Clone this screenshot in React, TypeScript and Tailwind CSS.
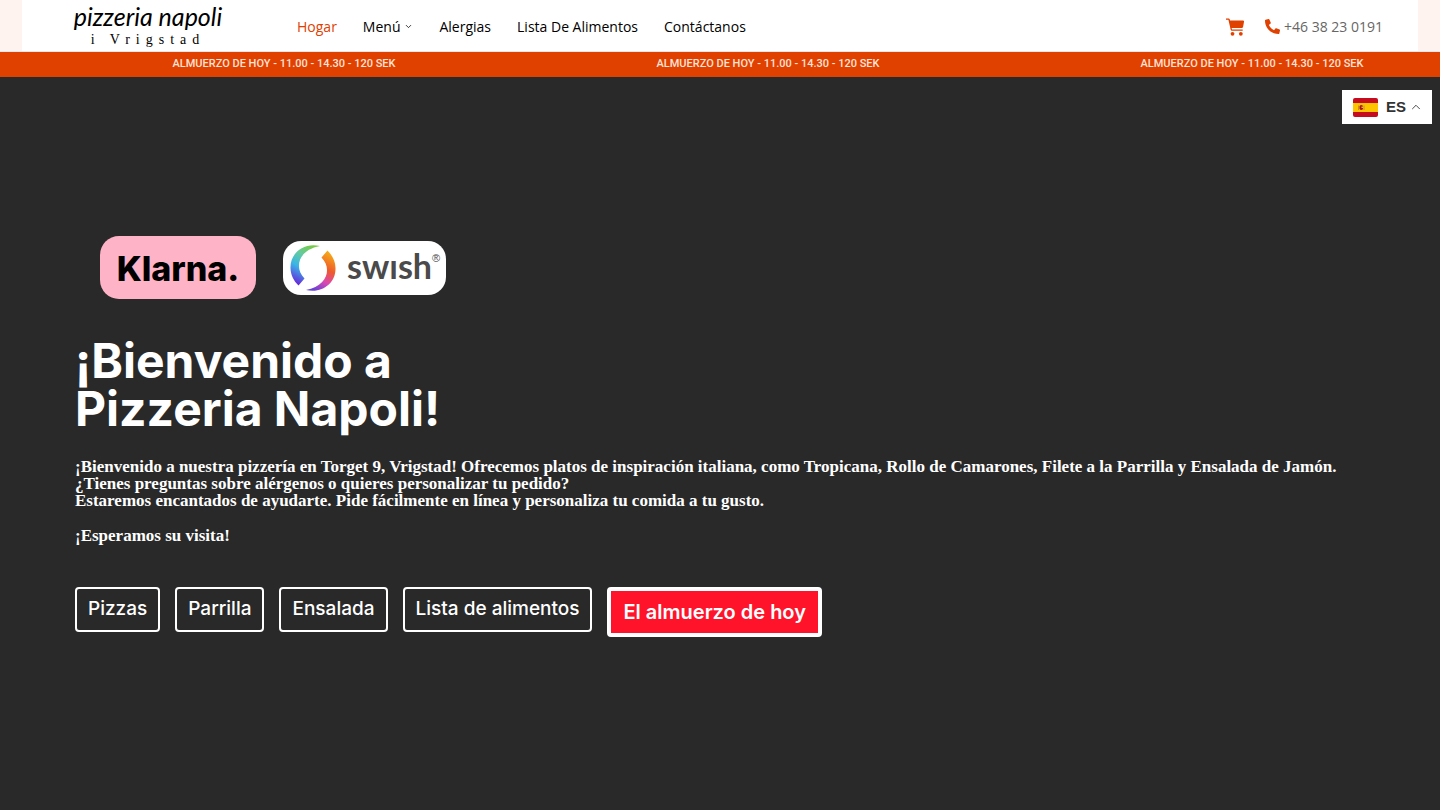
import { FaPhoneAlt } from "react-icons/fa"
import { ChevronDown, ChevronUp } from "lucide-react"

const navLinks = [
  { label: "Hogar", active: true },
  { label: "Menú", dropdown: true },
  { label: "Alergias" },
  { label: "Lista De Alimentos" },
  { label: "Contáctanos" },
]

const categories = ["Pizzas", "Parrilla", "Ensalada", "Lista de alimentos"]

function CartIcon() {
  return (
    <svg width="18" height="18" viewBox="0 0 18 18" fill="currentColor">
      <path d="M0 0.500h2.800q.700 0 .900.700L4.100 2.500H17q1.200 0 1 1.200l-.900 5q-.200 1.300-1.500 1.300H5.600l.400 1.500h10.700v1.200H5.800q-.900 0-1.100-.900L2.400 1.800H0Z" />
      <circle cx="6.500" cy="15.800" r="1.900" />
      <circle cx="14.800" cy="15.800" r="1.900" />
    </svg>
  )
}

function Header() {
  return (
    <header className="bg-[#fff3f0] px-[22px] border-b border-gray-200">
      <div className="flex items-center h-[51px] bg-white pl-[52px] pr-[35px]">
        <a href="#" className="flex flex-col items-center w-[148px] text-black">
          <span className="font-['Lato'] italic text-[25px] leading-[28px] whitespace-nowrap">pizzeria napoli</span>
          <span className="font-['Liberation_Serif'] text-[14px] leading-[20px] tracking-[6px] whitespace-nowrap">
            i Vrigstad
          </span>
        </a>
        <nav className="flex items-center gap-[26px] ml-[75px] pt-[2px] font-['Open_Sans'] text-[14px] font-medium">
          {navLinks.map((link) => (
            <a
              key={link.label}
              href="#"
              className={`flex items-center gap-1 whitespace-nowrap ${link.active ? "text-[#e04000]" : "text-black"}`}
            >
              {link.label}
              {link.dropdown && <ChevronDown size={9} strokeWidth={2} />}
            </a>
          ))}
        </nav>
        <div className="flex items-center ml-auto pt-[2px] gap-[21px]">
          <a href="#" aria-label="Carrito" className="text-[#e04000]">
            <CartIcon />
          </a>
          <a href="tel:+4638230191" className="flex items-center gap-1 font-['Open_Sans'] text-[14px] text-[#666]">
            <FaPhoneAlt size={15} className="text-[#e04000]" />
            +46 38 23 0191
          </a>
        </div>
      </div>
    </header>
  )
}

function Ticker() {
  return (
    <div className="flex h-[25px] items-center overflow-hidden bg-[#e04000] pl-[42px] font-['Roboto'] text-[11px] font-medium text-[#ffe3d6]">
      {[0, 1, 2].map((i) => (
        <p key={i} className="w-[484px] shrink-0 text-center whitespace-nowrap">
          ALMUERZO DE HOY - 11.00 - 14.30 - 120 SEK
        </p>
      ))}
    </div>
  )
}

function SpainFlag() {
  return (
    <svg width="25" height="19" viewBox="0 0 25 19">
      <clipPath id="flag">
        <rect width="25" height="19" rx="2" />
      </clipPath>
      <g clipPath="url(#flag)">
        <rect width="25" height="19" fill="#c60b1e" />
        <rect y="5" width="25" height="9" fill="#ffc400" />
        <path d="M5 7.500h1v4.500H5zM10.500 7.500h1v4.500h-1z" fill="#c98a3a" />
        <path d="M6.500 8q1.800-2 3.500 0v3q-1.700 2-3.500 0z" fill="#ad1519" />
        <path d="M8.500 8.500H10V10H8.500z" fill="#e8b34b" />
      </g>
    </svg>
  )
}

function LanguageSwitch() {
  return (
    <button className="absolute top-[90px] right-2 flex items-center h-[34px] w-[90px] pl-[11px] bg-white text-[#333] font-['Liberation_Sans'] text-[15px] font-bold">
      <SpainFlag />
      <span className="ml-2">ES</span>
      <ChevronUp size={14} strokeWidth={1.5} className="ml-[3px]" />
    </button>
  )
}

function SwishMark() {
  return (
    <svg width="46" height="46" viewBox="0 0 46 46">
      <defs>
        <linearGradient id="swishLeft" x1="0.700" y1="0" x2="0.300" y2="1">
          <stop offset="0" stopColor="#78c943" />
          <stop offset="0.300" stopColor="#63cba0" />
          <stop offset="0.600" stopColor="#39b5e8" />
          <stop offset="1" stopColor="#6826d9" />
        </linearGradient>
        <linearGradient id="swishRight" x1="0.700" y1="0" x2="0.300" y2="1">
          <stop offset="0" stopColor="#f5ae16" />
          <stop offset="0.400" stopColor="#ee5a2c" />
          <stop offset="0.700" stopColor="#d947b5" />
          <stop offset="1" stopColor="#6341d5" />
        </linearGradient>
      </defs>
      <path d="M30 1C14-3 0 8 .500 23c.200 7 3 12.500 8 17.500l6-7C4 23 8 5 30 1Z" fill="url(#swishLeft)" />
      <path d="M16 45c16 4 30-7 29.500-22-.200-7-3-12.500-8-17.500l-6 7C42 23 38 41 16 45Z" fill="url(#swishRight)" />
    </svg>
  )
}

function PaymentLogos() {
  return (
    <div className="flex items-center gap-[27px] pl-[25px]">
      <div className="flex items-center justify-center w-[156px] h-[63px] pt-[2px] rounded-[19px] bg-[#ffb3c7] text-black font-['Inter'] text-[34px] font-extrabold">
        Klarna.
      </div>
      <div className="flex items-center w-[163px] h-[54px] rounded-[18px] bg-white pl-[7px] text-[#4a4a4a]">
        <SwishMark />
        <span aria-label="swish" className="ml-[11px] pb-1 font-['Lato'] text-[34px] leading-[40px] font-bold">
          swısh
        </span>
        <span className="self-start mt-[10px] font-['Liberation_Sans'] text-[11px] leading-[14px]">®</span>
      </div>
    </div>
  )
}

export default function App() {
  return (
    <div className="relative flex flex-col min-h-screen bg-[#292929] text-white">
      <Header />
      <Ticker />
      <LanguageSwitch />
      <main className="flex-1 px-[75px] pt-[159px] pb-20">
        <PaymentLogos />
        <h1 className="mt-[38px] font-['Inter'] text-[48px] leading-[48px] font-bold">
          ¡Bienvenido a
          <br />
          Pizzeria Napoli!
        </h1>
        <div className="mt-[25px] font-['Liberation_Serif'] text-[17px] leading-[17px] font-bold">
          <p>
            ¡Bienvenido a nuestra pizzería en Torget 9, Vrigstad! Ofrecemos platos de inspiración italiana, como
            Tropicana, Rollo de Camarones, Filete a la Parrilla y Ensalada de Jamón.
          </p>
          <p>¿Tienes preguntas sobre alérgenos o quieres personalizar tu pedido?</p>
          <p>Estaremos encantados de ayudarte. Pide fácilmente en línea y personaliza tu comida a tu gusto.</p>
          <p className="mt-[18px]">¡Esperamos su visita!</p>
        </div>
        <div className="flex flex-wrap items-start gap-[15px] mt-[43px] font-['Inter']">
          {categories.map((category) => (
            <button
              key={category}
              className="h-[45px] px-[11px] border-2 border-white rounded text-[19px] font-medium"
            >
              {category}
            </button>
          ))}
          <button className="h-[50px] px-3 border-4 border-white rounded bg-[#ff132b] text-[20px] font-semibold">
            El almuerzo de hoy
          </button>
        </div>
      </main>
    </div>
  )
}
